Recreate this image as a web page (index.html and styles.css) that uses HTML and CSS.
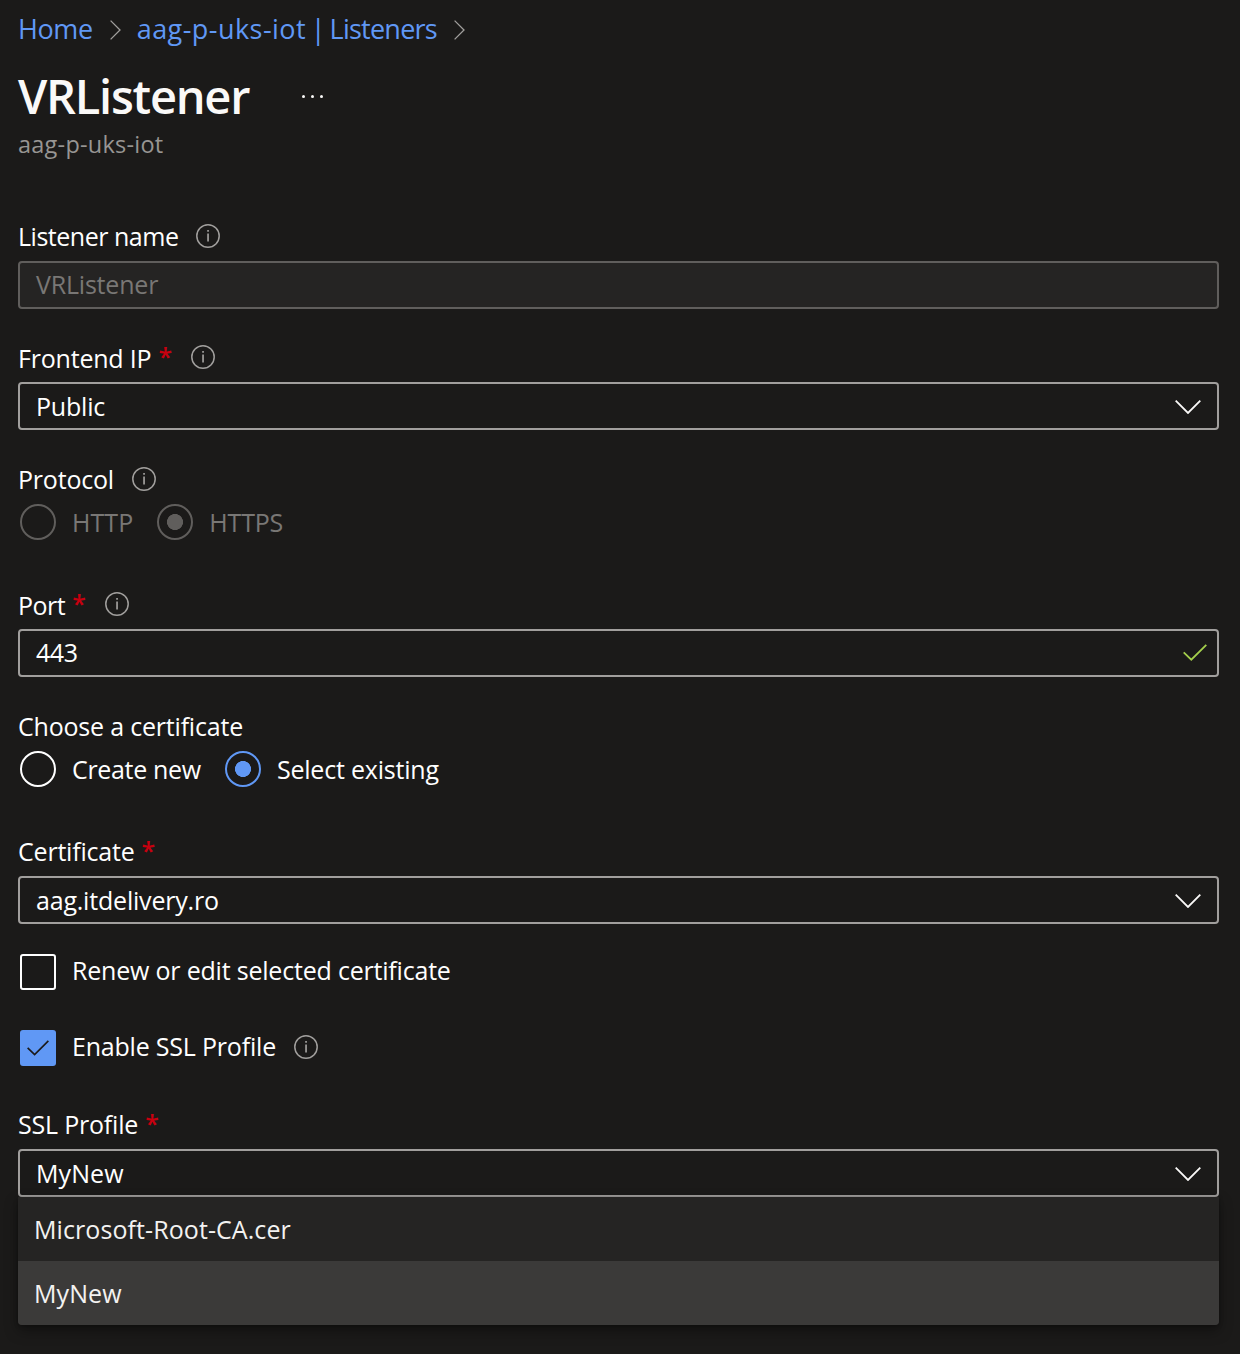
FILE: index.html
```html
<!DOCTYPE html>
<html lang="en">
<head>
<meta charset="utf-8">
<title>VRListener</title>
<link rel="stylesheet" href="styles.css">
</head>
<body>
<svg class="defs" aria-hidden="true">
  <symbol id="info" viewBox="0 0 24 24"><circle cx="12" cy="12" r="11.2" fill="none" stroke="currentColor" stroke-width="1.5"/><path d="M11.2 6h1.7v1.8h-1.7zM11.2 9.6h1.7v8h-1.7z" fill="currentColor"/></symbol>
  <symbol id="down" viewBox="0 0 26 14"><path d="M.7.7 13 13 25.3.7" fill="none" stroke="currentColor" stroke-width="1.8"/></symbol>
  <symbol id="next" viewBox="0 0 11 20"><path d="M.6.6 10 10 .6 19.4" fill="none" stroke="currentColor" stroke-width="1.3"/></symbol>
  <symbol id="check" viewBox="0 0 24 17"><path d="M.7 8.3 8.3 15.7 23.3.8" fill="none" stroke="currentColor" stroke-width="1.8"/></symbol>
</svg>
<main class="blade">
  <nav class="crumbs">
    <a class="crumb">Home</a><svg class="next"><use href="#next"/></svg>
    <a class="crumb"><span class="resource">aag-p-uks-iot</span><span class="page"> | Listeners</span></a><svg class="next"><use href="#next"/></svg>
  </nav>
  <header>
    <div class="title-row">
      <h1>VRListener</h1>
      <span class="more"><i></i><i></i><i></i></span>
    </div>
    <p class="subtitle">aag-p-uks-iot</p>
  </header>

  <section class="field">
    <div class="label"><span class="tight">Listener name</span><svg class="info"><use href="#info"/></svg></div>
    <div class="input disabled"><span>VRListener</span></div>
  </section>

  <section class="field field-ip">
    <div class="label label-low"><span>Frontend IP</span><b class="req">*</b><svg class="info"><use href="#info"/></svg></div>
    <div class="input select"><span>Public</span><svg class="down"><use href="#down"/></svg></div>
  </section>

  <section class="field field-protocol">
    <div class="label"><span>Protocol</span><svg class="info"><use href="#info"/></svg></div>
    <div class="radios muted">
      <span class="radio"></span><span class="option loose">HTTP</span>
      <span class="radio on"></span><span class="option">HTTPS</span>
    </div>
  </section>

  <section class="field field-port">
    <div class="label label-low"><span class="tight">Port</span><b class="req">*</b><svg class="info"><use href="#info"/></svg></div>
    <div class="input"><span class="tight">443</span><svg class="valid"><use href="#check"/></svg></div>
  </section>

  <section class="field field-source">
    <div class="label"><span>Choose a certificate</span></div>
    <div class="radios">
      <span class="radio"></span><span class="option option-new">Create new</span>
      <span class="radio on"></span><span class="option">Select existing</span>
    </div>
  </section>

  <section class="field field-cert">
    <div class="label"><span>Certificate</span><b class="req">*</b></div>
    <div class="input select"><span>aag.itdelivery.ro</span><svg class="down"><use href="#down"/></svg></div>
  </section>

  <div class="check-row"><span class="box"></span><span class="option">Renew or edit selected certificate</span></div>
  <div class="check-row check-ssl"><span class="box checked"><svg class="tick"><use href="#check"/></svg></span><span class="option">Enable SSL Profile</span><svg class="info"><use href="#info"/></svg></div>

  <section class="field field-ssl">
    <div class="label"><span>SSL Profile</span><b class="req">*</b></div>
    <div class="input select"><span class="loose">MyNew</span><svg class="down"><use href="#down"/></svg></div>
    <div class="menu">
      <div class="item loose">Microsoft-Root-CA.cer</div>
      <div class="item loose selected">MyNew</div>
    </div>
  </section>
</main>
</body>
</html>
```
FILE: styles.css
```css
* { box-sizing: border-box; }
body {
  margin: 0;
  background: #1b1a19;
  color: #fff;
  font: 25px/36px "Open Sans", "Noto Sans", sans-serif;
  letter-spacing: -0.2px;
}
svg { display: block; flex: none; }
.defs { position: absolute; width: 0; height: 0; }
.tight { letter-spacing: -0.48px; }
.loose { letter-spacing: 0.08px; }
.blade { height: 1354px; padding: 12px 21px 0 18px; overflow: hidden; }

.crumbs { display: flex; align-items: center; height: 36px; }
.crumb { margin-top: -2px; color: #6098f5; font-size: 27px; letter-spacing: -0.4px; white-space: pre; }
.resource { letter-spacing: 0.45px; }
.page { letter-spacing: -0.75px; word-spacing: -1.6px; }
.next { width: 11px; height: 20px; margin: 0 16px 0 17px; color: #a19f9d; }

.title-row { display: flex; height: 64px; margin-top: 16px; }
h1 { margin: 0; width: 231px; font-size: 47px; font-weight: 600; line-height: 64px; letter-spacing: -1.25px; color: #faf9f8; }
.more { display: flex; gap: 6px; margin: 31px 0 0 53px; }
.more i { width: 3px; height: 3px; border-radius: 50%; background: #faf9f8; }
.subtitle { margin: -2px 0 0; color: #979593; font-size: 23.5px; line-height: 36px; letter-spacing: 0.24px; }

.field { margin-top: 30px; }
header + .field { margin-top: 56px; }
.field-protocol { margin-top: 31px; }
.field-port { margin-top: 46px; }
.field-source { margin-top: 31px; }
.field-cert { margin-top: 46px; }
.label { display: flex; height: 43px; white-space: pre; }
.label-low > span { position: relative; top: 1px; }
.req { margin: -1px 1px 0 7px; width: 14px; color: #c8000f; font-weight: 600; }
.info { width: 24px; height: 24px; margin: 6px 0 0 18px; color: #a19f9d; }

.input {
  display: flex;
  align-items: center;
  height: 48px;
  padding: 0 10px 2px 16px;
  border: 2px solid #a19f9d;
  border-radius: 4px;
}
.input.select { padding: 0 16px; }
.input.disabled { padding-bottom: 3px; background: #252423; border-color: #605e5c; color: #797775; }
.down { width: 26px; height: 14px; margin: 1px 0 0 auto; color: #faf9f8; }
.valid { width: 24px; height: 17px; margin: 1px 0 0 auto; color: #a4cf4c; }

.radios { display: flex; height: 36px; padding-left: 2px; white-space: pre; }
.radio {
  width: 36px;
  height: 36px;
  border: 2px solid #fff;
  border-radius: 50%;
}
.radio.on { border-color: #6098f5; background: radial-gradient(circle, #6098f5 7.7px, transparent 8.3px); }
.option { margin: 0 24px 0 16px; }
.option-new { letter-spacing: -0.32px; }
.muted { color: #797775; }
.muted .radio { border-color: #605e5c; }
.muted .radio.on { background: radial-gradient(circle, #605e5c 7.7px, transparent 8.3px); }

.check-row { display: flex; height: 36px; margin-top: 30px; padding-left: 2px; }
.check-ssl { margin-top: 40px; }
.check-row .option { margin: -2px 0 0 16px; }
.box { width: 36px; height: 36px; border: 2px solid #fff; border-radius: 3px; }
.box.checked { border: 0; background: #6098f5; color: #1b1a19; }
.tick { width: 22px; height: 16px; margin: 10px 0 0 7px; }
.check-row .info { margin-top: 5px; }

.field-ssl { margin-top: 40px; }
.menu {
  border-radius: 0 0 4px 4px;
  overflow: hidden;
  background: #252423;
  color: #f3f2f1;
  box-shadow: 0 6px 14px rgba(0, 0, 0, .35), 0 1px 4px rgba(0, 0, 0, .3);
}
.item { height: 64px; padding: 0 16px; line-height: 64px; }
.item.selected { background: #3b3a39; }
```
